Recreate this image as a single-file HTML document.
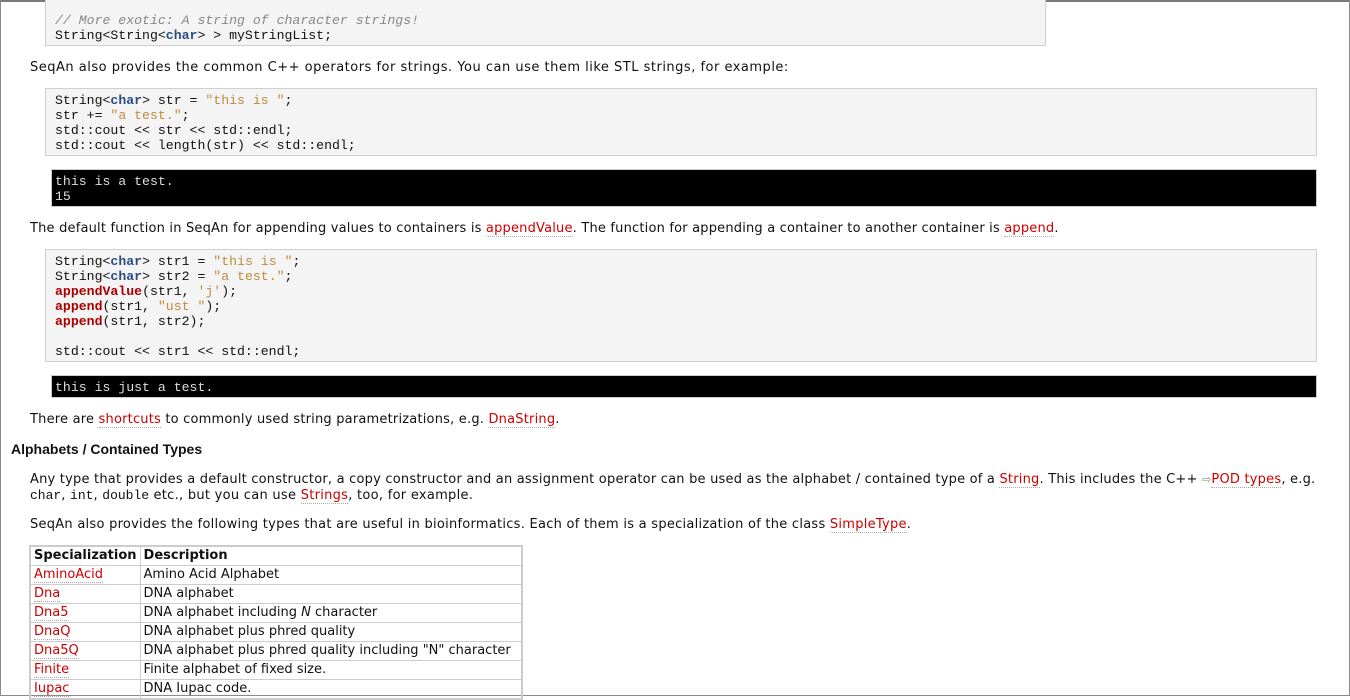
<!DOCTYPE html>
<html><head><meta charset="utf-8"><style>
html,body{margin:0;padding:0;background:#fff}
body{width:1350px;height:695px;position:relative;overflow:hidden;font-family:"DejaVu Sans","Liberation Sans",sans-serif;font-size:13px;color:#111}
.frame{position:absolute;left:0;top:0;width:1348px;height:693px;border:1px solid #8a8a8a;border-top:2px solid #7a7a7a;box-sizing:content-box}
.code{position:absolute;background:#f4f4f4;border:1px solid #cfcfcf;box-sizing:border-box;font-family:"Liberation Mono",monospace;font-size:13.2px;line-height:15px;padding-left:9px;color:#111;white-space:pre}
.out{position:absolute;background:#000;border:1px solid #ccc;box-sizing:border-box;font-family:"Liberation Mono",monospace;font-size:13.2px;line-height:15px;padding-left:3px;color:#ddd;white-space:pre}
.kw{color:#2c4d80;font-weight:bold}
.st{color:#c08a3e}
.cm{color:#888;font-style:italic}
.fn{color:#a00;font-weight:bold}
.p{position:absolute;left:30px;white-space:nowrap;line-height:16px;letter-spacing:0.2px}
a{color:#c00;text-decoration:none;border-bottom:1px dotted #aaa}
.mono{font-family:"Liberation Mono",monospace;font-size:13px;letter-spacing:0}
h3{position:absolute;left:11px;top:441px;margin:0;font-family:"Liberation Sans",sans-serif;font-size:14px;font-weight:bold}
table{position:absolute;left:29px;top:545px;width:494px;border-collapse:collapse;border:2px solid #ccc;font-size:13px}
td,th{border:1px solid #ccc;padding:0 3px;height:18px;line-height:18px;text-align:left;white-space:nowrap}
th{font-weight:bold}
td:first-child,th:first-child{width:100px}
</style></head><body>
<div class="frame"></div>
<div class="code" style="left:45px;top:-4px;width:1001px;height:50px;padding-top:16px"><span class="cm">// More exotic: A string of character strings!</span>
String&lt;String&lt;<span class="kw">char</span>&gt; &gt; myStringList;</div>
<div class="p" style="top:60px;letter-spacing:0.5px">SeqAn also provides the common C++ operators for strings. You can use them like STL strings, for example:</div>
<div class="code" style="left:45px;top:88px;width:1272px;height:68px;padding-top:4px">String&lt;<span class="kw">char</span>&gt; str = <span class="st">"this is "</span>;
str += <span class="st">"a test."</span>;
std::cout &lt;&lt; str &lt;&lt; std::endl;
std::cout &lt;&lt; length(str) &lt;&lt; std::endl;</div>
<div class="out" style="left:51px;top:169px;width:1266px;height:38px;padding-top:4px">this is a test.
15</div>
<div class="p" style="top:221px;letter-spacing:0.19px">The default function in SeqAn for appending values to containers is <a>appendValue</a>. The function for appending a container to another container is <a>append</a>.</div>
<div class="code" style="left:45px;top:249px;width:1272px;height:113px;padding-top:4px">String&lt;<span class="kw">char</span>&gt; str1 = <span class="st">"this is "</span>;
String&lt;<span class="kw">char</span>&gt; str2 = <span class="st">"a test."</span>;
<span class="fn">appendValue</span>(str1, <span class="st">'j'</span>);
<span class="fn">append</span>(str1, <span class="st">"ust "</span>);
<span class="fn">append</span>(str1, str2);

std::cout &lt;&lt; str1 &lt;&lt; std::endl;</div>
<div class="out" style="left:51px;top:375px;width:1266px;height:23px;padding-top:4px">this is just a test.</div>
<div class="p" style="top:412px;letter-spacing:0.2px">There are <a>shortcuts</a> to commonly used string parametrizations, e.g. <a>DnaString</a>.</div>
<h3>Alphabets / Contained Types</h3>
<div class="p" style="top:472px;letter-spacing:0.21px">Any type that provides a default constructor, a copy constructor and an assignment operator can be used as the alphabet / contained type of a <a>String</a>. This includes the C++ <span style="color:#7a9a6a;font-size:11px">&#8680;</span><a>POD types</a>, e.g.</div>
<div class="p" style="top:488px;letter-spacing:0.28px"><span class="mono">char</span>, <span class="mono">int</span>, <span class="mono">double</span> etc., but you can use <a>Strings</a>, too, for example.</div>
<div class="p" style="top:517px;letter-spacing:0.26px">SeqAn also provides the following types that are useful in bioinformatics. Each of them is a specialization of the class <a>SimpleType</a>.</div>
<table>
<tr><th>Specialization</th><th>Description</th></tr>
<tr><td><a>AminoAcid</a></td><td>Amino Acid Alphabet</td></tr>
<tr><td><a>Dna</a></td><td>DNA alphabet</td></tr>
<tr><td><a>Dna5</a></td><td>DNA alphabet including <i>N</i> character</td></tr>
<tr><td><a>DnaQ</a></td><td>DNA alphabet plus phred quality</td></tr>
<tr><td><a>Dna5Q</a></td><td>DNA alphabet plus phred quality including "N" character</td></tr>
<tr><td><a>Finite</a></td><td>Finite alphabet of fixed size.</td></tr>
<tr><td><a>Iupac</a></td><td>DNA Iupac code.</td></tr>
</table>
</body></html>
